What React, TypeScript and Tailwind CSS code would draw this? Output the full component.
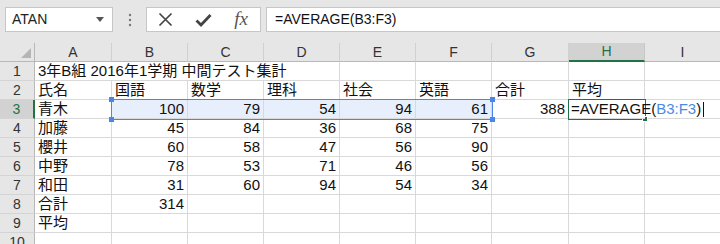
import React from "react";

const W = [
  "w-[77px]",
  "w-[76px]",
  "w-[76px]",
  "w-[76px]",
  "w-[76px]",
  "w-[76px]",
  "w-[77px]",
  "w-[76px]",
  "w-[76px]",
];
const LETTERS = ["A", "B", "C", "D", "E", "F", "G", "H", "I"];

type V = string | number | null;
const DATA: V[][] = [
  ["氏名", "国語", "数学", "理科", "社会", "英語", "合計", "平均", null],
  ["青木", 100, 79, 54, 94, 61, 388, null, null],
  ["加藤", 45, 84, 36, 68, 75, null, null, null],
  ["櫻井", 60, 58, 47, 56, 90, null, null, null],
  ["中野", 78, 53, 71, 46, 56, null, null, null],
  ["和田", 31, 60, 94, 54, 34, null, null, null],
  ["合計", 314, null, null, null, null, null, null, null],
  ["平均", null, null, null, null, null, null, null, null],
  [null, null, null, null, null, null, null, null, null],
];

const FONT = { fontFamily: '"Liberation Sans", "Noto Sans CJK JP", sans-serif' };

function RowHeader({ n, active }: { n: number; active?: boolean }) {
  return (
    <div
      className={
        active
          ? "w-[35px] shrink-0 h-full flex items-center justify-center bg-[#d2d2d2] text-[#217346] text-[14px] border-b border-[#d4d4d4] border-r-2 border-r-[#217346]"
          : "w-[35px] shrink-0 h-full flex items-center justify-center bg-[#e6e6e6] text-[#333] text-[14px] border-b border-[#d4d4d4] border-r border-r-[#b8b8b8]"
      }
    >
      {n}
    </div>
  );
}

function Cell({ v, i, sel }: { v: V; i: number; sel?: boolean }) {
  const isNum = typeof v === "number";
  return (
    <div
      className={
        W[i] +
        " shrink-0 h-full border-r border-b border-[#d9d9d9] px-[3px] flex items-center text-[15px] text-[#111] whitespace-nowrap " +
        (isNum ? "justify-end " : "justify-start ") +
        (sel ? "bg-[#e8effc]" : "bg-white")
      }
    >
      {v}
    </div>
  );
}

export default function App() {
  return (
    <div className="w-[720px] h-[244px] overflow-hidden bg-[#e6e6e6] relative" style={FONT}>
      {/* Toolbar */}
      <div className="h-[43px] flex items-start pt-[7px]">
        <div className="ml-[5px] w-[108px] h-[25px] bg-white border border-[#c6c6c6] flex items-center justify-between pl-[6px] pr-[8px] text-[14px] text-[#222]">
          <span>ATAN</span>
          <svg width="8" height="5" viewBox="0 0 8 5">
            <path d="M0 0 L8 0 L4 5 Z" fill="#555" />
          </svg>
        </div>
        <div className="w-[33px] h-[25px] flex items-center justify-center">
          <svg width="4" height="14" viewBox="0 0 4 14">
            <circle cx="2" cy="2" r="1.2" fill="#777" />
            <circle cx="2" cy="7" r="1.2" fill="#777" />
            <circle cx="2" cy="12" r="1.2" fill="#777" />
          </svg>
        </div>
        <div className="w-[115px] h-[25px] bg-white border border-[#c6c6c6] flex items-center">
          <div className="w-[38px] flex justify-center">
            <svg width="15" height="15" viewBox="0 0 15 15">
              <path d="M1.5 1.5 L13.5 13.5 M13.5 1.5 L1.5 13.5" stroke="#444" strokeWidth="1.7" fill="none" />
            </svg>
          </div>
          <div className="w-[38px] flex justify-center">
            <svg width="17" height="14" viewBox="0 0 17 14">
              <path d="M1.5 7.5 L6 12 L15.5 2" stroke="#444" strokeWidth="2.8" fill="none" />
            </svg>
          </div>
          <div
            className="w-[38px] flex justify-center text-[19px] italic text-[#555] leading-none -mt-[2px]"
            style={{ fontFamily: '"Liberation Serif", "DejaVu Serif", serif' }}
          >
            fx
          </div>
        </div>
        <div className="ml-[5px] flex-1 h-[25px] bg-white border border-[#c6c6c6] border-r-0 flex items-center pl-[8px] text-[14px] text-[#111]">
          =AVERAGE(B3:F3)
        </div>
      </div>

      {/* Grid */}
      <div className="relative">
        {/* Column header */}
        <div className="flex h-[19px]">
          <div className="w-[35px] shrink-0 h-full relative border-r border-b border-[#b8b8b8] bg-[#e6e6e6]">
            <svg className="absolute right-[3px] bottom-[3px]" width="10" height="10" viewBox="0 0 10 10">
              <path d="M10 0 L10 10 L0 10 Z" fill="#b5b5b5" />
            </svg>
          </div>
          {LETTERS.map((l, i) =>
            l === "H" ? (
              <div
                key={l}
                className={
                  W[i] +
                  " shrink-0 h-full flex items-center justify-center bg-[#d2d2d2] text-[#217346] text-[14px] border-r border-r-[#c8c8c8] border-b-2 border-b-[#217346]"
                }
              >
                {l}
              </div>
            ) : (
              <div
                key={l}
                className={
                  W[i] +
                  " shrink-0 h-full flex items-center justify-center bg-[#e6e6e6] text-[#333] text-[14px] border-r border-r-[#d0d0d0] border-b border-b-[#b8b8b8]"
                }
              >
                {l}
              </div>
            )
          )}
        </div>

        {/* Row 1 */}
        <div className="flex h-[19px]">
          <RowHeader n={1} />
          <div className="w-[305px] shrink-0 h-full bg-white border-r border-b border-[#d9d9d9] px-[3px] flex items-center text-[15px] text-[#111] whitespace-nowrap">
            3年B組 2016年1学期 中間テスト集計
          </div>
          {[4, 5, 6, 7, 8].map((i) => (
            <Cell key={i} v={null} i={i} />
          ))}
        </div>

        {DATA.map((row, r) => {
          const n = r + 2;
          return (
            <div key={n} className="flex h-[19px]">
              <RowHeader n={n} active={n === 3} />
              {row.map((v, i) =>
                n === 3 && i === 7 ? (
                  <div
                    key={i}
                    className={W[i] + " shrink-0 h-full bg-white border-b border-[#d9d9d9] relative z-10"}
                  >
                    <div className="absolute left-[2px] top-0 h-full flex items-center text-[15px] whitespace-nowrap text-[#111]">
                      <span>=AVERAGE(</span>
                      <span className="text-[#4a8ae6]">B3:F3</span>
                      <span>)</span>
                      <span className="ml-[2px] w-px h-[15px] bg-[#111]" />
                    </div>
                  </div>
                ) : n === 3 && i === 8 ? (
                  <div key={i} className={W[i] + " shrink-0 h-full bg-white border-r border-b border-[#d9d9d9]"} />
                ) : (
                  <Cell key={i} v={v} i={i} sel={n === 3 && i >= 1 && i <= 5} />
                )
              )}
            </div>
          );
        })}

        {/* Range highlight B3:F3 */}
        <div className="absolute left-[111px] top-[56px] w-[382px] h-[21px] border-[1.5px] border-[#4a86e6] pointer-events-none z-20">
          <div className="absolute -left-[3px] -top-[3px] w-[5px] h-[5px] bg-[#4a86e6]" />
          <div className="absolute -right-[3px] -top-[3px] w-[5px] h-[5px] bg-[#4a86e6]" />
          <div className="absolute -left-[3px] -bottom-[3px] w-[5px] h-[5px] bg-[#4a86e6]" />
          <div className="absolute -right-[3px] -bottom-[3px] w-[5px] h-[5px] bg-[#4a86e6]" />
        </div>

        {/* Active cell H3 */}
        <div className="absolute left-[568px] top-[56px] w-[78px] h-[21px] border-2 border-[#217346] pointer-events-none z-0">
          <div className="absolute -right-[4px] -bottom-[4px] w-[6px] h-[6px] bg-[#217346] border border-white" />
        </div>
      </div>
    </div>
  );
}
